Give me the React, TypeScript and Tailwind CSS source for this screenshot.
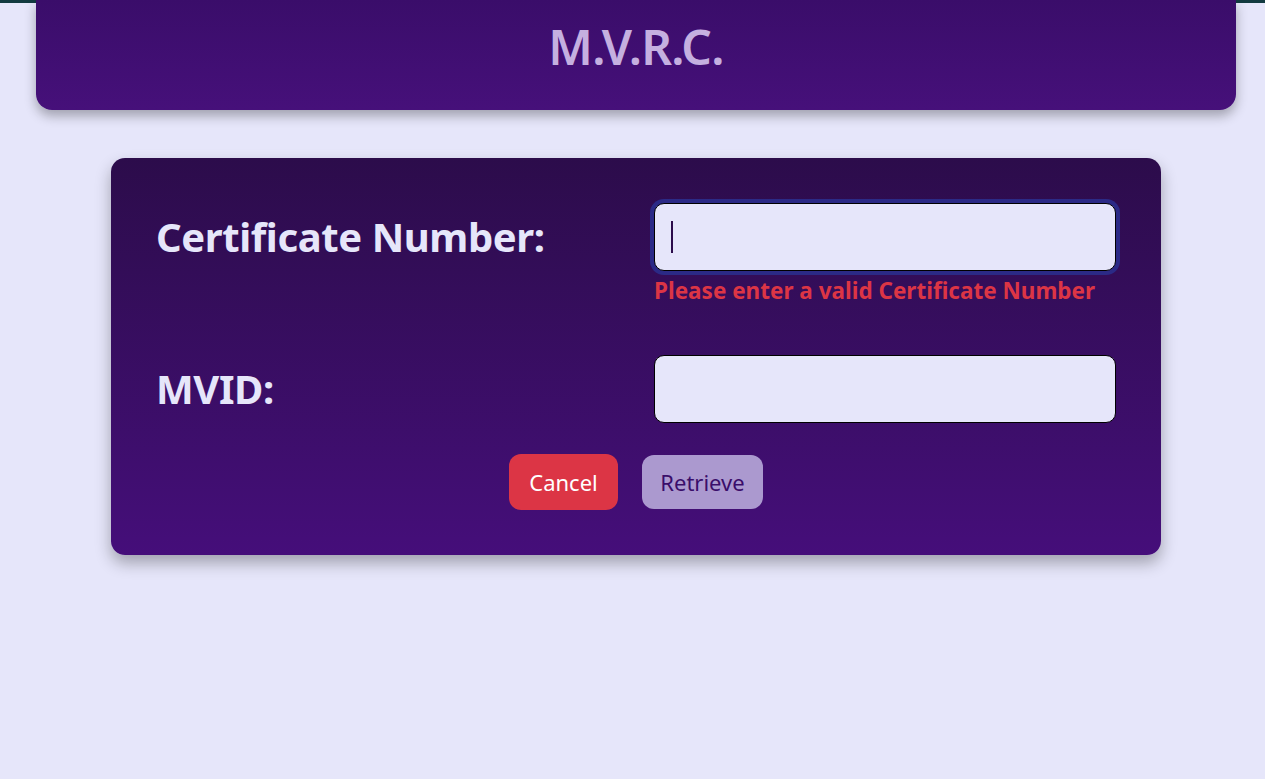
import React from "react";

const font = { fontFamily: '"Noto Sans", "Open Sans", sans-serif' };

const Field = ({ label, error, focused }: { label: string; error?: string; focused?: boolean }) => {
  return (
    <div className="flex items-start">
      <label className="w-[498px] pt-[10px] text-[40px] font-bold leading-[48px] text-[#e6e6fa] tracking-[-0.4px]">
        {label}
      </label>
      <div className="flex flex-col">
        <div
          className={
            focused
              ? "flex h-[68px] w-[462px] items-center rounded-[10px] border border-black bg-[#e6e6fa] px-4 ring-4 ring-[#2b2a86]"
              : "flex h-[68px] w-[462px] items-center rounded-[10px] border border-black bg-[#e6e6fa] px-4"
          }
        >
          {focused && <span className="h-[32px] w-[2px] bg-[#2c0c4b]" />}
        </div>
        {error && (
          <p className="mt-[7px] text-[22.5px] font-bold leading-[26px] text-[#dc3545]">{error}</p>
        )}
      </div>
    </div>
  );
};

export default function App() {
  return (
    <div style={font} className="min-h-[779px] w-full bg-[#e6e6fa]">
      <div className="h-[3px] w-full bg-[#123a40]" />
      {/* header */}
      <header className="-mt-[3px] ml-[36px] flex h-[110px] w-[1200px] items-center justify-center rounded-b-[16px] bg-gradient-to-b from-[#3a0d6a] to-[#46107a] pb-[16px] shadow-[0_6px_12px_rgba(0,0,0,0.3)]">
        <h1 className="text-[48px] font-semibold tracking-[-0.8px] text-[#c5b0e0]">M.V.R.C.</h1>
      </header>

      {/* form card */}
      <form className="ml-[111px] mt-[48px] flex w-[1050px] flex-col rounded-[14px] bg-gradient-to-b from-[#2c0c4b] to-[#450e7a] px-[45px] pt-[45px] pb-[45px] shadow-[0_8px_16px_rgba(0,0,0,0.3)]">
        <Field label="Certificate Number:" error="Please enter a valid Certificate Number" focused />
        <div className="h-[51px]" />
        <Field label="MVID:" />
        <div className="mt-[31px] flex justify-center gap-[24px]">
          <button
            type="button"
            className="h-[56px] w-[109px] rounded-[12px] bg-[#dc3545] text-[22px] text-white"
          >
            Cancel
          </button>
          <button
            type="button"
            className="mt-[1px] h-[54px] w-[121px] rounded-[12px] bg-[#ab99cf] text-[22px] text-[#3a0d6a]"
          >
            Retrieve
          </button>
        </div>
      </form>
    </div>
  );
}
